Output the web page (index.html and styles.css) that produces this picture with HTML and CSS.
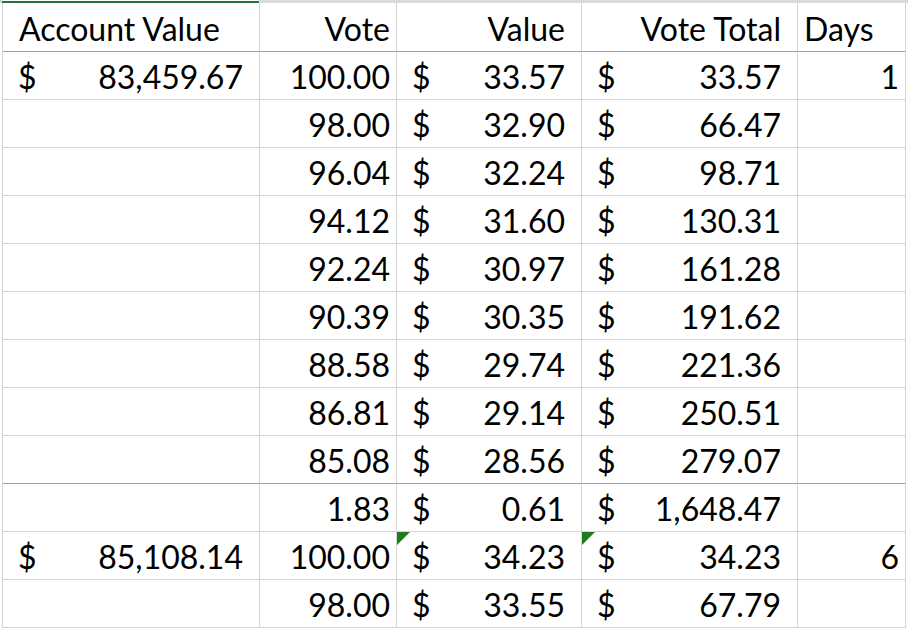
FILE: index.html
```html
<!DOCTYPE html>
<html>
<head>
<meta charset="utf-8">
<link rel="stylesheet" href="styles.css">
</head>
<body>
<div class="topbar"><div class="tb-pad"></div><div class="tb-green"></div><div class="tb-gray"></div></div>
<div class="sheet">
  <div class="c hd left ind">Account Value</div>
  <div class="c hd right">Vote</div>
  <div class="c hd right accpad">Value</div>
  <div class="c hd right accpad">Vote Total</div>
  <div class="c hd left">Days</div>

  <div class="c acc"><span>$</span><span>83,459.67</span></div>
  <div class="c right">100.00</div>
  <div class="c acc"><span>$</span><span>33.57</span></div>
  <div class="c acc"><span>$</span><span>33.57</span></div>
  <div class="c right">1</div>

  <div class="c"></div>
  <div class="c right">98.00</div>
  <div class="c acc"><span>$</span><span>32.90</span></div>
  <div class="c acc"><span>$</span><span>66.47</span></div>
  <div class="c"></div>

  <div class="c"></div>
  <div class="c right">96.04</div>
  <div class="c acc"><span>$</span><span>32.24</span></div>
  <div class="c acc"><span>$</span><span>98.71</span></div>
  <div class="c"></div>

  <div class="c"></div>
  <div class="c right">94.12</div>
  <div class="c acc"><span>$</span><span>31.60</span></div>
  <div class="c acc"><span>$</span><span>130.31</span></div>
  <div class="c"></div>

  <div class="c"></div>
  <div class="c right">92.24</div>
  <div class="c acc"><span>$</span><span>30.97</span></div>
  <div class="c acc"><span>$</span><span>161.28</span></div>
  <div class="c"></div>

  <div class="c"></div>
  <div class="c right">90.39</div>
  <div class="c acc"><span>$</span><span>30.35</span></div>
  <div class="c acc"><span>$</span><span>191.62</span></div>
  <div class="c"></div>

  <div class="c"></div>
  <div class="c right">88.58</div>
  <div class="c acc"><span>$</span><span>29.74</span></div>
  <div class="c acc"><span>$</span><span>221.36</span></div>
  <div class="c"></div>

  <div class="c"></div>
  <div class="c right">86.81</div>
  <div class="c acc"><span>$</span><span>29.14</span></div>
  <div class="c acc"><span>$</span><span>250.51</span></div>
  <div class="c"></div>

  <div class="c sep"></div>
  <div class="c sep right">85.08</div>
  <div class="c sep acc"><span>$</span><span>28.56</span></div>
  <div class="c sep acc"><span>$</span><span>279.07</span></div>
  <div class="c sep"></div>

  <div class="c"></div>
  <div class="c right">1.83</div>
  <div class="c acc"><span>$</span><span>0.61</span></div>
  <div class="c acc"><span>$</span><span>1,648.47</span></div>
  <div class="c"></div>

  <div class="c acc"><span>$</span><span>85,108.14</span></div>
  <div class="c right">100.00</div>
  <div class="c acc flag"><span>$</span><span>34.23</span></div>
  <div class="c acc flag"><span>$</span><span>34.23</span></div>
  <div class="c right">6</div>

  <div class="c"></div>
  <div class="c right">98.00</div>
  <div class="c acc"><span>$</span><span>33.55</span></div>
  <div class="c acc"><span>$</span><span>67.79</span></div>
  <div class="c"></div>
</div>
</body>
</html>
```

FILE: styles.css
```css
html, body {
  margin: 0;
  padding: 0;
  background: #ffffff;
  overflow: hidden;
}

body {
  font-family: Lato, "Open Sans", sans-serif;
  font-size: 32px;
  color: #000000;
}

.topbar {
  display: flex;
  height: 3px;
}

.tb-pad {
  width: 2px;
  background: #d4d4d4;
}

.tb-green {
  width: 257px;
  border-top: 1px solid #ffffff;
  background: #217346;
  box-sizing: border-box;
}

.tb-gray {
  flex: 1;
  background: #dadada;
}

.sheet {
  display: grid;
  grid-template-columns: 257px 137px 185px 216px 108px;
  margin-left: 2px;
  border-left: 1px solid #d4d4d4;
  width: max-content;
}

.c {
  position: relative;
  box-sizing: border-box;
  height: 48px;
  border-right: 1px solid #d4d4d4;
  border-bottom: 1px solid #d4d4d4;
  display: flex;
  align-items: flex-end;
  line-height: 36px;
  padding-bottom: 4px;
  white-space: nowrap;
}

.hd {
  height: 49px;
  border-bottom-color: #9e9e9e;
}

.sep {
  border-bottom-color: #9e9e9e;
}

.left {
  justify-content: flex-start;
  padding-left: 6px;
}

.ind {
  padding-left: 16px;
}

.right {
  justify-content: flex-end;
  padding-right: 6px;
}

.accpad {
  padding-right: 16px;
}

.acc {
  justify-content: space-between;
  padding-left: 15px;
  padding-right: 16px;
}

.flag::before {
  content: "";
  position: absolute;
  top: 0;
  left: 0;
  width: 0;
  height: 0;
  border-top: 13px solid #1d7d1d;
  border-right: 13px solid transparent;
}
```
